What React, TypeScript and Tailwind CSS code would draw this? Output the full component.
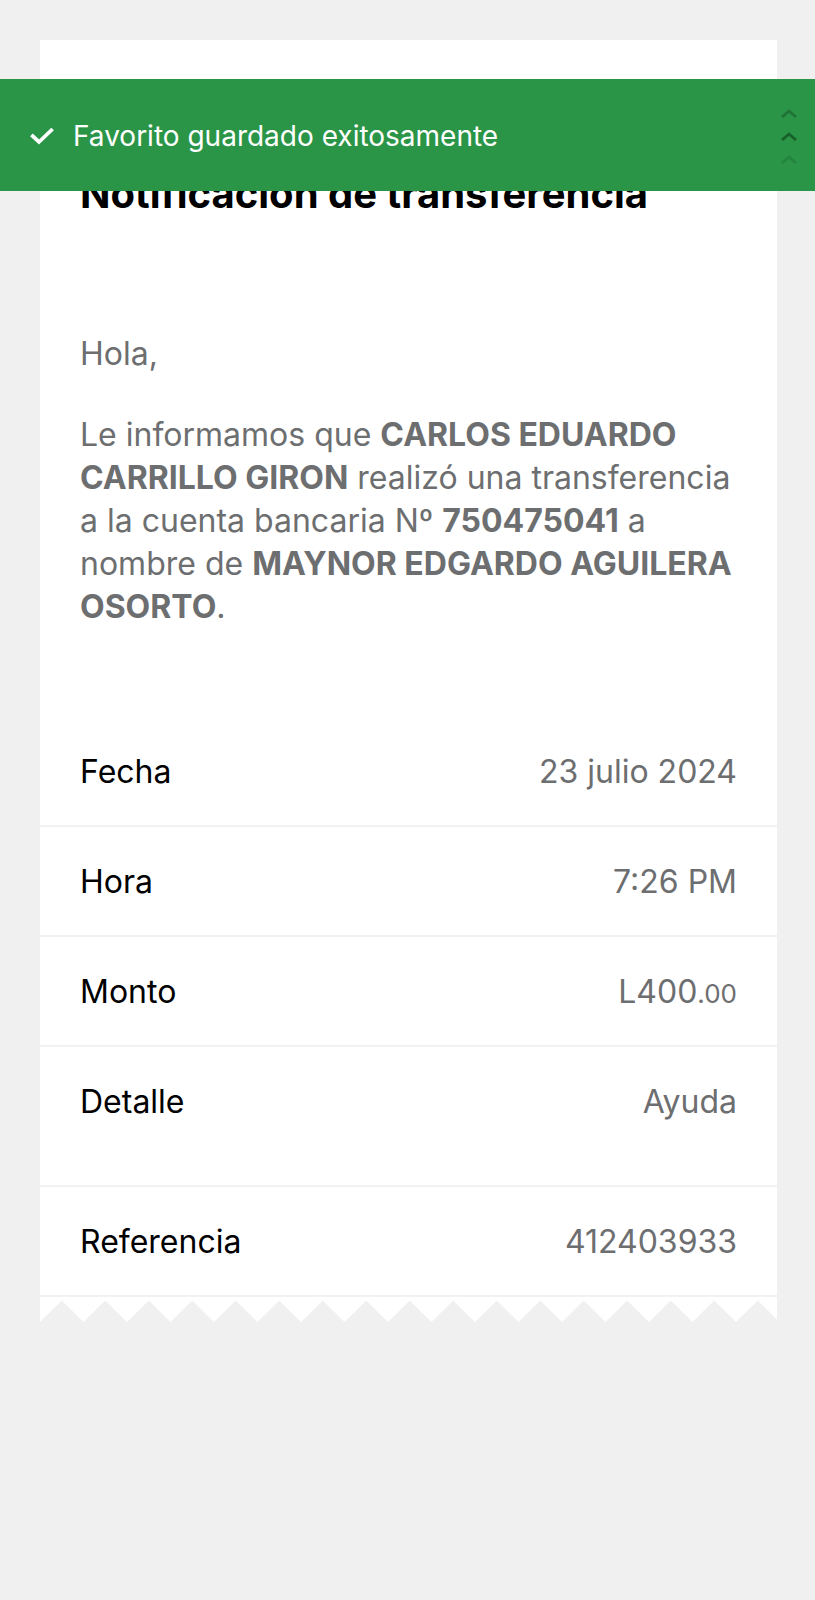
import type { ReactNode } from 'react';

type Row = { label: string; value: ReactNode; tall?: boolean };

const rows: Row[] = [
  { label: 'Fecha', value: '23 julio 2024' },
  { label: 'Hora', value: '7:26 PM' },
  {
    label: 'Monto',
    value: (
      <>
        L400<span className="text-[26px] leading-none">.00</span>
      </>
    ),
  },
  { label: 'Detalle', value: 'Ayuda', tall: true },
  { label: 'Referencia', value: '412403933' },
];

function CheckIcon() {
  return (
    <svg className="h-[18px] w-6 shrink-0" viewBox="0 0 24 18" fill="none" aria-hidden="true">
      <path d="M1.4 7.8 9 15 22.6 2" stroke="#fff" strokeWidth="3.8" />
    </svg>
  );
}

function Chevron({ className }: { className: string }) {
  return (
    <svg className={`h-[9px] w-4 ${className}`} viewBox="0 0 16 9" fill="none" stroke="currentColor" aria-hidden="true">
      <path d="M1 8 8 2 15 8" strokeWidth="2.8" />
    </svg>
  );
}

function Toast() {
  return (
    <div role="status" className="absolute inset-x-0 top-[79px] flex h-28 items-center bg-[#2a9547] pt-0.5 pr-[18px] pl-[30px]">
      <CheckIcon />
      <p className="ml-[19px] flex-1 text-[28px] leading-9 text-white">Favorito guardado exitosamente</p>
      <button type="button" aria-label="Ocultar" className="flex flex-col gap-[14px]">
        <Chevron className="text-[#1f7336]" />
        <Chevron className="text-[#17602a]" />
        <Chevron className="text-[#248540]" />
      </button>
    </div>
  );
}

function TornEdge() {
  return (
    <svg className="block h-[25px] w-full" aria-hidden="true">
      <defs>
        <pattern id="torn" width="43.5" height="25" patternUnits="userSpaceOnUse">
          <path d="M0 0H43.5V25L21.75 3.5 0 25Z" fill="#fff" />
        </pattern>
      </defs>
      <rect width="100%" height="25" fill="url(#torn)" />
    </svg>
  );
}

export default function App() {
  return (
    <div className="relative min-h-screen bg-[#f0f0f0] pt-10 pr-[38px] pb-10 pl-10 font-['Inter',sans-serif]">
      <main className="text-[32px] leading-[43px] text-[#6d6e70]">
        <div className="bg-white pt-[130px]">
          <h1 className="px-10 text-[40px] leading-[48px] font-bold text-black">Notificación de transferencia</h1>
          <div className="mt-[114px] pr-8 pl-10">
            <p>Hola,</p>
            <p className="mt-[38px]">
              Le informamos que <strong className="font-bold">CARLOS EDUARDO CARRILLO GIRON</strong> realizó una
              transferencia a la cuenta bancaria Nº <strong className="font-bold">750475041</strong> a nombre de{' '}
              <strong className="font-bold">MAYNOR EDGARDO AGUILERA OSORTO</strong>.
            </p>
          </div>
          <dl className="pt-[89px]">
            {rows.map((row) => (
              <div
                key={row.label}
                className={`flex justify-between border-b-2 border-[#f2f2f2] px-10 pt-[33px] ${row.tall ? 'pb-[62px]' : 'pb-8'}`}
              >
                <dt className="text-black">{row.label}</dt>
                <dd>{row.value}</dd>
              </div>
            ))}
          </dl>
        </div>
        <TornEdge />
      </main>
      <Toast />
    </div>
  );
}
